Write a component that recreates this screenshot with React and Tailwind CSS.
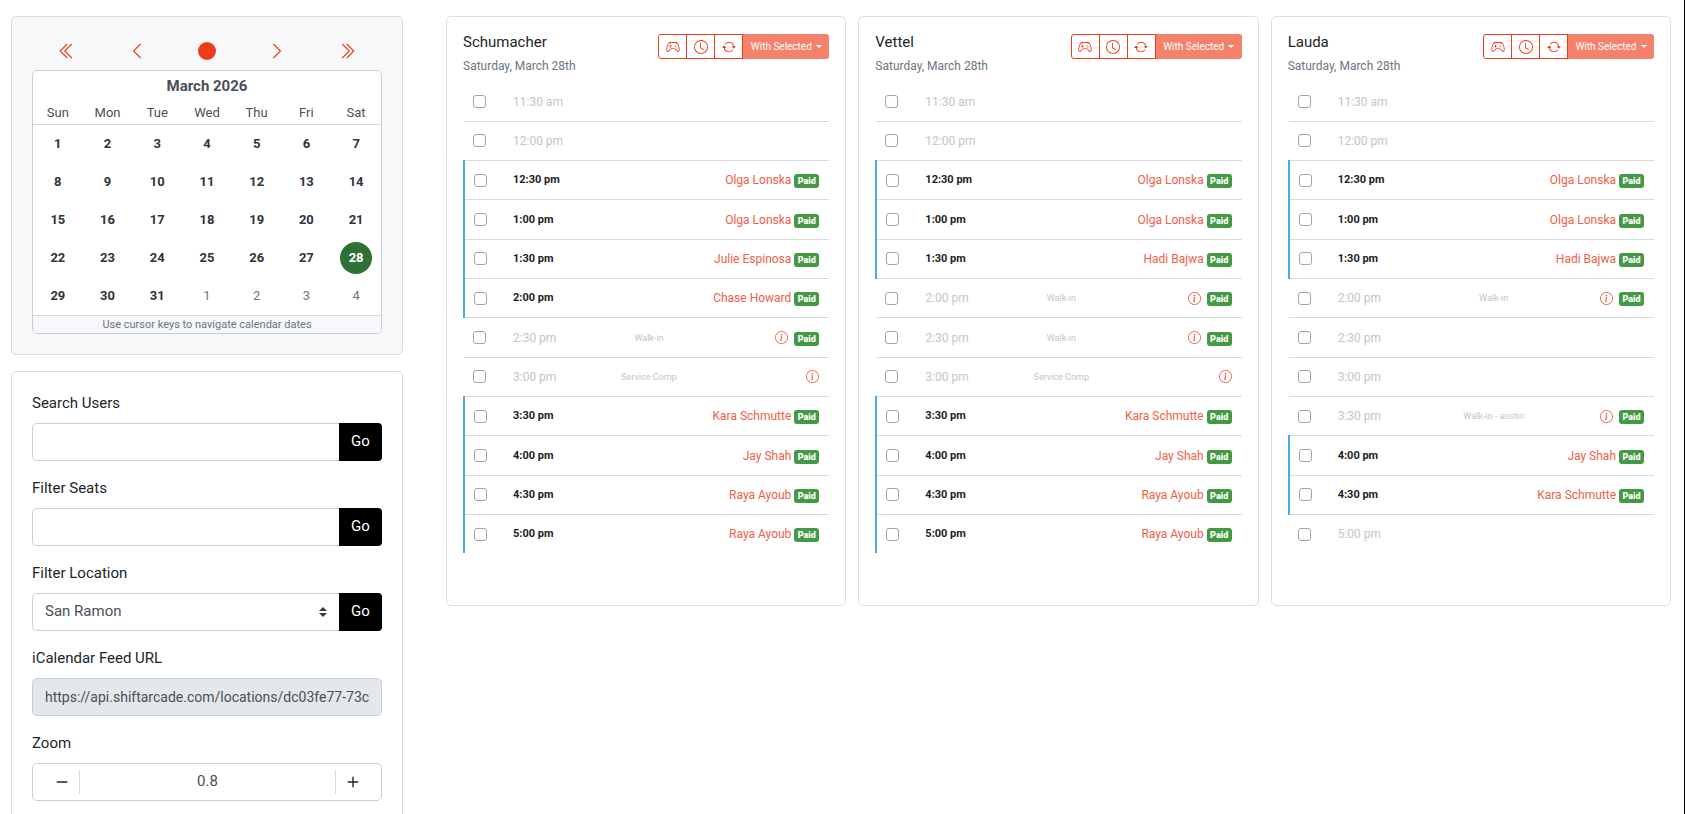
import { useState } from 'react';
import {
  BsArrowRepeat,
  BsChevronDoubleLeft,
  BsChevronDoubleRight,
  BsChevronLeft,
  BsChevronRight,
  BsCircleFill,
  BsClock,
  BsController,
  BsDash,
  BsInfoCircle,
  BsPlus,
} from 'react-icons/bs';

const WEEKDAYS = ['Sun', 'Mon', 'Tue', 'Wed', 'Thu', 'Fri', 'Sat'];

const WEEKS = [
  [1, 2, 3, 4, 5, 6, 7],
  [8, 9, 10, 11, 12, 13, 14],
  [15, 16, 17, 18, 19, 20, 21],
  [22, 23, 24, 25, 26, 27, 28],
  [29, 30, 31, 1, 2, 3, 4],
];

const SEATS = [
  {
    name: 'Schumacher',
    timeCol: 'w-[96px]',
    slots: [
      { time: '11:30 am' },
      { time: '12:00 pm' },
      { time: '12:30 pm', user: 'Olga Lonska', paid: true },
      { time: '1:00 pm', user: 'Olga Lonska', paid: true },
      { time: '1:30 pm', user: 'Julie Espinosa', paid: true },
      { time: '2:00 pm', user: 'Chase Howard', paid: true },
      { time: '2:30 pm', note: 'Walk-in', paid: true },
      { time: '3:00 pm', note: 'Service Comp' },
      { time: '3:30 pm', user: 'Kara Schmutte', paid: true },
      { time: '4:00 pm', user: 'Jay Shah', paid: true },
      { time: '4:30 pm', user: 'Raya Ayoub', paid: true },
      { time: '5:00 pm', user: 'Raya Ayoub', paid: true },
    ],
  },
  {
    name: 'Vettel',
    timeCol: 'w-[96px]',
    slots: [
      { time: '11:30 am' },
      { time: '12:00 pm' },
      { time: '12:30 pm', user: 'Olga Lonska', paid: true },
      { time: '1:00 pm', user: 'Olga Lonska', paid: true },
      { time: '1:30 pm', user: 'Hadi Bajwa', paid: true },
      { time: '2:00 pm', note: 'Walk-in', paid: true },
      { time: '2:30 pm', note: 'Walk-in', paid: true },
      { time: '3:00 pm', note: 'Service Comp' },
      { time: '3:30 pm', user: 'Kara Schmutte', paid: true },
      { time: '4:00 pm', user: 'Jay Shah', paid: true },
      { time: '4:30 pm', user: 'Raya Ayoub', paid: true },
      { time: '5:00 pm', user: 'Raya Ayoub', paid: true },
    ],
  },
  {
    name: 'Lauda',
    timeCol: 'w-[116px]',
    slots: [
      { time: '11:30 am' },
      { time: '12:00 pm' },
      { time: '12:30 pm', user: 'Olga Lonska', paid: true },
      { time: '1:00 pm', user: 'Olga Lonska', paid: true },
      { time: '1:30 pm', user: 'Hadi Bajwa', paid: true },
      { time: '2:00 pm', note: 'Walk-in', paid: true },
      { time: '2:30 pm' },
      { time: '3:00 pm' },
      { time: '3:30 pm', note: 'Walk-in - austin', paid: true },
      { time: '4:00 pm', user: 'Jay Shah', paid: true },
      { time: '4:30 pm', user: 'Kara Schmutte', paid: true },
      { time: '5:00 pm' },
    ],
  },
];

function Calendar() {
  const [selected, setSelected] = useState(28);

  const navButtons = [
    { label: 'Previous year', Icon: BsChevronDoubleLeft },
    { label: 'Previous month', Icon: BsChevronLeft },
    { label: 'Current month', Icon: BsCircleFill },
    { label: 'Next month', Icon: BsChevronRight },
    { label: 'Next year', Icon: BsChevronDoubleRight },
  ];

  return (
    <section className="rounded-[5px] border border-[#dadcdf] bg-[#f7f8fa] p-5">
      <div className="mb-[5px] flex">
        {navButtons.map(({ label, Icon }) => (
          <button
            key={label}
            type="button"
            aria-label={label}
            className="flex h-7 flex-1 items-center justify-center text-[#ec3c1a]"
          >
            <Icon size={18} />
          </button>
        ))}
      </div>

      <div className="overflow-hidden rounded-[5px] border border-[#c9ced6] bg-white">
        <h2 className="text-center text-[15px] leading-[31px] font-bold text-[#495057]">March 2026</h2>
        <table className="w-full table-fixed text-center">
          <thead>
            <tr className="border-b border-[#d5d8dc] text-[13px] leading-[22px] text-[#495057]">
              {WEEKDAYS.map((day) => (
                <th key={day} className="font-normal">{day}</th>
              ))}
            </tr>
          </thead>
          <tbody>
            {WEEKS.map((week, w) => (
              <tr key={w}>
                {week.map((day, d) => {
                  const outside = w === 4 && day < 7;
                  const active = !outside && day === selected;
                  const look = active
                    ? 'bg-[#2f7135] font-bold text-white'
                    : outside
                      ? 'text-[#6c757d]'
                      : 'font-bold text-[#2f343a]';
                  return (
                    <td key={d} className="h-[38px]">
                      <button
                        type="button"
                        onClick={() => !outside && setSelected(day)}
                        className={`mx-auto flex size-8 items-center justify-center rounded-full text-[13px] ${look}`}
                      >
                        {day}
                      </button>
                    </td>
                  );
                })}
              </tr>
            ))}
          </tbody>
        </table>
        <p className="border-t border-[#d5d8dc] bg-[#f7f8fa] text-center text-[11px] leading-[17px] text-[#6c757d]">
          Use cursor keys to navigate calendar dates
        </p>
      </div>
    </section>
  );
}

function GoButton() {
  return (
    <button type="submit" className="h-[38px] w-[43px] rounded-r-[4px] bg-black text-[15px] text-white">
      Go
    </button>
  );
}

function Field({ id, label, children }) {
  return (
    <div className="mb-4">
      <label htmlFor={id} className="mb-[9px] block text-[15px] leading-[22px] text-[#212529]">
        {label}
      </label>
      <div className="flex">{children}</div>
    </div>
  );
}

function Filters() {
  const [zoom, setZoom] = useState(0.8);

  return (
    <form
      onSubmit={(e) => e.preventDefault()}
      className="rounded-[5px] border border-[#dadcdf] bg-white p-5"
    >
      <Field id="search-users" label="Search Users">
        <input
          id="search-users"
          type="text"
          className="h-[38px] min-w-0 flex-1 rounded-l-[5px] border border-r-0 border-[#c9ced6] px-3 text-[15px] text-[#495057]"
        />
        <GoButton />
      </Field>

      <Field id="filter-seats" label="Filter Seats">
        <input
          id="filter-seats"
          type="text"
          className="h-[38px] min-w-0 flex-1 rounded-l-[5px] border border-r-0 border-[#c9ced6] px-3 text-[15px] text-[#495057]"
        />
        <GoButton />
      </Field>

      <Field id="filter-location" label="Filter Location">
        <div className="relative flex-1">
          <select
            id="filter-location"
            className="h-[38px] w-full appearance-none rounded-l-[5px] border border-r-0 border-[#c9ced6] bg-white px-3 text-[15px] text-[#495057]"
          >
            <option>San Ramon</option>
          </select>
          <svg
            viewBox="0 0 4 5"
            className="pointer-events-none absolute top-[14px] right-3 h-[10px] w-2"
          >
            <path fill="#343a40" d="M2 0L0 2h4zm0 5L0 3h4z" />
          </svg>
        </div>
        <GoButton />
      </Field>

      <Field id="feed-url" label="iCalendar Feed URL">
        <input
          id="feed-url"
          type="text"
          readOnly
          value="https://api.shiftarcade.com/locations/dc03fe77-73c"
          className="h-[38px] w-full rounded-[5px] border border-[#c9ced6] bg-[#e4e8eb] px-3 text-[14px] text-[#495057]"
        />
      </Field>

      <Field id="zoom" label="Zoom">
        <div className="flex h-[38px] w-full items-center rounded-[5px] border border-[#c9ced6]">
          <button
            type="button"
            aria-label="Decrement"
            onClick={() => setZoom((z) => Math.max(0.1, z - 0.1))}
            className="flex h-6 w-[47px] items-center justify-end border-r border-[#dadcdf] pr-[6px] text-[#212529]"
          >
            <BsDash size={22} />
          </button>
          <output id="zoom" className="flex-1 text-center text-[15px] text-[#495057]">
            {zoom.toFixed(1)}
          </output>
          <button
            type="button"
            aria-label="Increment"
            onClick={() => setZoom((z) => z + 0.1)}
            className="flex h-6 w-[46px] items-center justify-start border-l border-[#dadcdf] pl-[6px] text-[#212529]"
          >
            <BsPlus size={22} />
          </button>
        </div>
      </Field>
    </form>
  );
}

function SlotRow({ seat, slot, last }) {
  const booked = !!slot.user;

  return (
    <tr className={last ? 'leading-[18px]' : 'border-b border-[#d9dbdf] leading-[18px]'}>
      <td className={booked ? 'border-l-2 border-[#4aace3] pl-[9px]' : 'pl-[9px]'}>
        <input
          type="checkbox"
          aria-label={`${seat} ${slot.time}`}
          className="block size-[13px] appearance-none rounded-[3px] border border-[#9fa5ad] bg-white checked:bg-[#ec3c1a]"
        />
      </td>
      <td className={booked ? 'text-[11px] font-bold text-[#1b1e21]' : 'text-[12px] text-[#c4c4c4]'}>
        {slot.time}
      </td>
      <td className="text-center text-[9px] whitespace-nowrap text-[#c4c4c4]">{slot.note}</td>
      <td className="pr-[10px]">
        <div className="flex h-[18px] items-center justify-end">
          {booked && (
            <a href="#user" className="text-[12px] whitespace-nowrap text-[#f06048]">
              {slot.user}
            </a>
          )}
          {slot.note && (
            <button
              type="button"
              aria-label="Details"
              className={slot.paid ? 'mr-[3px] text-[#f0583e]' : 'text-[#f0583e]'}
            >
              <BsInfoCircle size={13} />
            </button>
          )}
          {slot.paid && (
            <span className="mt-[2px] ml-[3px] w-[25px] shrink-0 rounded-[3px] bg-[#449944] text-center text-[9px] leading-[14px] font-black text-white">
              Paid
            </span>
          )}
        </div>
      </td>
    </tr>
  );
}

function SeatCard({ seat }) {
  const tools = [
    { label: 'Game', Icon: BsController },
    { label: 'Time', Icon: BsClock },
    { label: 'Refresh', Icon: BsArrowRepeat },
  ];

  return (
    <section className="rounded-[5px] border border-[#dedede] bg-white px-4 pt-4 pb-[52px]">
      <header className="flex h-[50px] items-start justify-between">
        <div>
          <h2 className="text-[15px] leading-[18px] text-[#212529]">{seat.name}</h2>
          <p className="mt-[7px] text-[12px] leading-4 text-[#6c757d]">Saturday, March 28th</p>
        </div>
        <div className="flex h-[26px] pt-px text-[#ec3c1a]">
          {tools.map(({ label, Icon }) => (
            <button
              key={label}
              type="button"
              aria-label={label}
              className="-mr-px flex w-[29px] items-center justify-center border border-[#ec3c1a] first:rounded-l-[3px]"
            >
              <Icon size={14} />
            </button>
          ))}
          <button
            type="button"
            className="flex w-[87px] items-center justify-center gap-1 rounded-r-[3px] border-l border-[#ec3c1a] bg-[#f4826b] pb-px text-[10px] whitespace-nowrap text-white"
          >
            With Selected
            <svg viewBox="0 0 6 3" className="h-[3px] w-[6px]">
              <path d="M0 0h6L3 3z" fill="currentColor" />
            </svg>
          </button>
        </div>
      </header>

      <table className="h-[470px] w-full table-fixed border-collapse">
        <colgroup>
          <col className="w-[49px]" />
          <col className={seat.timeCol} />
          <col className="w-[80px]" />
          <col />
        </colgroup>
        <tbody>
          {seat.slots.map((slot, i) => (
            <SlotRow
              key={slot.time}
              seat={seat.name}
              slot={slot}
              last={i === seat.slots.length - 1}
            />
          ))}
        </tbody>
      </table>
    </section>
  );
}

function App() {
  return (
    <div className="flex h-screen items-start overflow-hidden border-r border-black bg-white pt-4 pr-[13px] pl-[11px] font-[Roboto,'Liberation_Sans',sans-serif]">
      <aside className="mr-[43px] flex w-[392px] shrink-0 flex-col gap-4">
        <Calendar />
        <Filters />
      </aside>
      <main className="grid min-w-0 flex-1 grid-cols-3 gap-3">
        {SEATS.map((seat) => (
          <SeatCard key={seat.name} seat={seat} />
        ))}
      </main>
    </div>
  );
}

export default App;
